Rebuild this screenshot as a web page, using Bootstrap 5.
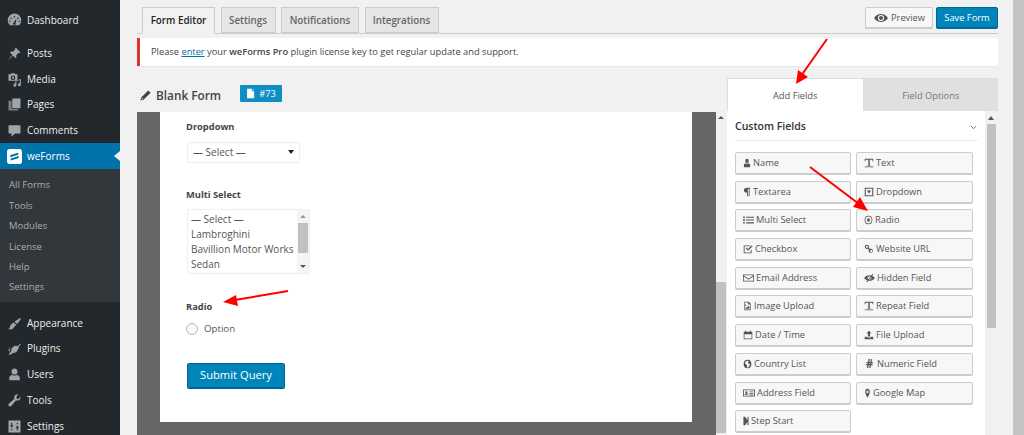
<!DOCTYPE html>
<html lang="en">
<head>
  <meta charset="UTF-8" />
  <meta name="viewport" content="width=device-width, initial-scale=1" />
  <title>weForms</title>
  <link href="https://cdn.jsdelivr.net/npm/bootstrap@5.3.0/dist/css/bootstrap.min.css" rel="stylesheet" />
  <style>
    html, body { height: 435px; overflow: hidden; }
    body { font-family: "Open Sans", "Liberation Sans", sans-serif; font-size: 10px; color: #444; background: #f1f1f1; position: relative; }
    .wp-page { height: 435px; }
    /* admin menu */
    .wp-side { width: 120px; flex: none; background: #23282d; color: #eee; padding-top: 8px; }
    .wp-item { height: 25.7px; padding-left: 7px; gap: 5px; font-size: 10px; }
    .wp-item svg { width: 15px; height: 15px; fill: #a0a5aa; flex: none; }
    .wp-item-active { background: #0073aa; color: #fff; position: relative; height: 26px; }
    .wp-item-active::after { content: ""; position: absolute; right: 0; top: 8px; border: 5px solid transparent; border-right: 6px solid #f1f1f1; border-left: 0; }
    .wp-gap-a { height: 7px; }
    .wp-gap-b { height: 8px; }
    .wp-sub { background: #32373c; padding: 6px 0 5px; height: 133px; }
    .wp-sub div { height: 20.4px; line-height: 20px; padding-left: 9px; font-size: 9.5px; color: #a9aeb3; }
    /* main */
    .wp-main { width: 893px; flex: none; padding: 7px 15px 0 17px; }
    .wp-scroll-main { flex: 1; background: #c4c4c4; }
    .wf-tabs { border-bottom: 1px solid #ccc; height: 27px; padding-left: 5px; gap: 5.5px; }
    .wf-tabs .nav-link { height: 26px; padding: 0; line-height: 25px; text-align: center; font-size: 9.8px; font-weight: 600; color: #666; background: #e5e5e5; border: 1px solid #ccc; border-radius: 0; margin: 0; }
    .wf-tabs .nav-link.active { background: #f1f1f1; color: #222; border-bottom-color: #f1f1f1; height: 27px; }
    .wf-tabs .nav-item:nth-child(1) .nav-link { width: 73px; }
    .wf-tabs .nav-item:nth-child(2) .nav-link { width: 55px; }
    .wf-tabs .nav-item:nth-child(3) .nav-link { width: 78px; }
    .wf-tabs .nav-item:nth-child(4) .nav-link { width: 74px; }
    .wf-actions { right: 0; top: 0; gap: 3px; }
    .wf-top { position: relative; }
    .btn-preview, .btn-save { height: 21px; padding: 0 8px; font-size: 9.3px; border-radius: 2px; line-height: 19px; }
    .btn-preview { background: #f7f7f7; border: 1px solid #ccc; color: #555; box-shadow: 0 1px 0 #ccc; width: 68px; display: flex; align-items: center; gap: 3px; }
    .btn-preview svg { width: 14px; height: 14px; fill: #555; flex: none; }
    .btn-save { background: #0085ba; border: 1px solid #006799; color: #fff; box-shadow: 0 1px 0 #006799; width: 62px; padding: 0; }
    .wf-notice { background: #fff; border: 0; border-left: 3px solid #dc3232; border-radius: 0; height: 28px; margin: 4px 0 12px; padding: 0 11px; line-height: 28px; font-size: 9.3px; color: #444; box-shadow: 0 1px 1px rgba(0,0,0,.04); }
    .wf-notice a { color: #0073aa; }
    .wf-notice b { font-weight: 600; }
    .wf-work { gap: 1px; height: 357px; }
    .wf-left { width: 589px; flex: none; }
    .wf-title { height: 34px; padding-left: 3px; padding-top: 1px; gap: 1px; font-size: 11.8px; font-weight: 600; color: #444; }
    .wf-title svg { width: 11px; height: 11px; fill: #444; flex: none; }
    .wf-badge { background: #0e8fc4; color: #fff; border-radius: 1px; height: 17px; width: 42px; margin-left: 18px; margin-bottom: 4px; font-size: 9.3px; font-weight: 400; gap: 3px; }
    .wf-badge svg { width: 10px; height: 11px; fill: #fff; }
    .wf-canvas-wrap { height: 323px; }
    .wf-canvas { width: 579px; background: #666; padding: 0 24px 13px 23px; }
    .wf-sheet { background: #fff; height: 100%; padding: 8px 27px; }
    .wf-scroll { width: 10px; background: #f1f1f1; position: relative; }
    .wf-thumb { position: absolute; left: 0; right: 0; background: #c1c1c1; }
    .wf-up { position: absolute; left: 2px; top: 4px; border: 3px solid transparent; border-bottom: 3px solid #555; border-top: 0; }
    .wf-label { font-size: 9.3px; font-weight: 700; color: #444; line-height: 14px; margin: 0 0 0 -1px; }
    .wf-selwrap { width: 113px; height: 21px; position: relative; margin: 8px 0 25px; }
    .wf-selwrap select { width: 100%; height: 100%; padding: 0 5px; border: 1px solid #eee; border-radius: 2px; font: inherit; font-size: 10px; color: #555; background: #fff; appearance: none; box-shadow: none; }
    .wf-selwrap::after { content: ""; position: absolute; right: 6px; top: 8px; border: 3px solid transparent; border-top: 4px solid #222; border-bottom: 0; }
    .wf-multi { width: 123px; height: 65px; border: 1px solid #eee; border-radius: 2px; margin: 7px 0 26px; font-size: 10px; line-height: 14.9px; color: #555; }
    .wf-multi ul { padding: 2px 3px; margin: 0; list-style: none; white-space: nowrap; flex: 1; }
    .wf-multi .wf-scroll { width: 13px; background: #f5f5f5; }
    .wf-multi .wf-thumb { top: 13px; height: 30px; left: 1px; right: 1px; }
    .wf-multi .wf-up { left: 3px; top: 5px; border-bottom-color: #999; }
    .wf-down { position: absolute; left: 3px; bottom: 5px; border: 3px solid transparent; border-top: 3px solid #555; border-bottom: 0; }
    .wf-radio { gap: 6px; margin: 9px 0 28px -1px; font-size: 9.7px; color: #555; height: 12px; }
    .wf-radio .form-check-input { width: 12px; height: 12px; margin: 0; border: 1px solid #b4b9be; background: #fafafa; }
    .btn-submit { background: #0085ba; border: 1px solid #006799; color: #fff; box-shadow: 0 1px 0 #006799; font-size: 11.2px; width: 98px; height: 25px; padding: 0; border-radius: 2px; }
    /* field panel */
    .wf-right { width: 271px; flex: none; }
    .wf-ptabs { height: 33px; }
    .wf-ptabs div { width: 50%; height: 33px; line-height: 33px; text-align: center; font-size: 9.3px; background: #e0e0e0; color: #777; border: 1px solid #ddd; border-width: 1px 0 0 1px; }
    .wf-ptabs .wf-ptab-on { background: #fff; color: #555; }
    .wf-panel { height: 324px; background: #fff; }
    .wf-panel-in { flex: 1; padding: 0 7px 0 8px; }
    .wf-panel .wf-scroll { width: 13px; }
    .wf-panel .wf-thumb { top: 13px; height: 204px; left: 2px; right: 2px; }
    .wf-panel .wf-up { left: 3px; top: 5px; border-width: 0 3.5px 4px; }
    .wf-head { height: 30px; padding-top: 3px; border-bottom: 1px solid #eee; font-size: 10.5px; font-weight: 600; color: #333; }
    .wf-head svg { width: 7px; height: 5px; margin-right: 1px; fill: none; stroke: #666; stroke-width: 1.2; }
    .wf-fields { display: grid; grid-template-columns: 116px 117px; column-gap: 5px; row-gap: 6.7px; margin-top: 11px; }
    .btn-field { height: 22px; padding: 0 0 0 7px; border: 1px solid #ccc; border-radius: 2px; background: #f7f7f7; box-shadow: 0 1px 0 #ccc; font-size: 9.3px; color: #555; display: flex; align-items: center; gap: 2px; white-space: nowrap; }
    .btn-field svg { height: 10px; fill: #555; flex: none; }
    .btn-field b { font-size: 11.5px; line-height: 1; width: 11px; color: #555; }
    .wf-w6 { width: 6px; } .wf-w7 { width: 7px; } .wf-w8 { width: 8px; } .wf-w9 { width: 9px; }
    .wf-w10 { width: 10px; } .wf-w11 { width: 11px; } .wf-w12 { width: 12px; }
    /* annotation arrows */
    .wf-arrows { position: absolute; left: 0; top: 0; width: 1024px; height: 435px; pointer-events: none; }
  </style>
</head>
<body>

<svg width="0" height="0" class="position-absolute">
  <symbol id="i-dash" viewBox="0 0 20 20"><path d="M3.800 16.300A9 9 0 1 1 16.200 16.300ZM10 4a1 1 0 1 0 0 2 1 1 0 0 0 0-2ZM5.500 6a1 1 0 1 0 0 2 1 1 0 0 0 0-2ZM14.500 6a1 1 0 1 0 0 2 1 1 0 0 0 0-2ZM3.800 10a1 1 0 1 0 0 2 1 1 0 0 0 0-2ZM16.200 10a1 1 0 1 0 0 2 1 1 0 0 0 0-2ZM8.600 13.200a1.600 1.600 0 1 0 2.800 1.200L12.500 7.500Z" fill-rule="evenodd"/></symbol>
  <symbol id="i-pin" viewBox="0 0 20 20"><path d="M11.500 2 18 8.500l-1.500 1-1-.5-3.200 3.200c.5 1.500.2 3-.8 4L8 12.700 2.500 18 2 17.500 7.300 12 3.800 8.500c1-1 2.500-1.300 4-.8L11 4.500l-.5-1Z"/></symbol>
  <symbol id="i-media" viewBox="0 0 20 20"><path d="M2 3h3l1-1.500h4L11 3h3v8.500H2ZM8 4.500a3 3 0 1 0 0 6 3 3 0 0 0 0-6ZM8 6a1.500 1.500 0 1 1 0 3 1.500 1.500 0 0 1 0-3ZM18.500 9v8a2 2 0 1 1-1.500-1.900V10.500L12.500 12v5.500a2 2 0 1 1-1.500-1.900V12.500Z" fill-rule="evenodd"/></symbol>
  <symbol id="i-pages" viewBox="0 0 20 20"><path d="M7 2h11v13H7Z"/><path d="M2 5h4v11h9v2H2Z" opacity=".7"/></symbol>
  <symbol id="i-comment" viewBox="0 0 20 20"><path d="M3 3h14a1 1 0 0 1 1 1v9a1 1 0 0 1-1 1h-6l-5 4v-4H3a1 1 0 0 1-1-1V4a1 1 0 0 1 1-1Z"/></symbol>
  <symbol id="i-brush" viewBox="0 0 20 20"><path d="M18.500 3c.3 1.500-2.500 5-5 7.500l-3.500-3C12.500 5.500 17 2.500 18.500 3ZM9 8.500l3.500 3-1.500 1.500-4 4.500H1.500c2-1 2.500-2.500 3-4.500.5-2 2.500-3.500 4.500-4.500Z"/></symbol>
  <symbol id="i-plug" viewBox="0 0 20 20"><path d="M16.500 2.500 13 6l1 1 3.500-3.500 1 1L15 8l1 1-3 5c-1 1.500-3 2-4.500 1.500L5.500 18H2l4-5.500c-.5-1.500 0-3 1.200-3.800L11 6l1 1 3.500-3.500Z M3 8l1 6-2-1Z"/></symbol>
  <symbol id="i-user" viewBox="0 0 20 20"><path d="M10 2a4 4 0 0 1 4 4.500c0 2-1.500 3.500-4 3.500S6 8.500 6 6.500A4 4 0 0 1 10 2ZM7 10.500c2 1.200 4 1.200 6 0 2.500.5 4 1.500 4 3.500v3.500H3V14c0-2 1.500-3 4-3.500Z"/></symbol>
  <symbol id="i-wrench" viewBox="0 0 20 20"><path d="M17.800 4.500c.7 2-.1 4-1.600 5-1.200.8-2.800.8-4 .3L6 17c-1 1.200-2.500 1.200-3.500.2S1.500 15 2.800 14l7-6.300c-.5-1.300-.4-2.800.4-4 1-1.500 3-2.200 5-1.500L12.500 5l.5 2.500 2.500.5Z"/></symbol>
  <symbol id="i-sliders" viewBox="0 0 20 20"><path d="M2 2h16v16H2ZM5.500 5v3.500H4l2.200 3 2.200-3H7V5ZM13 15v-3.500h-1.500l2.300-3 2.200 3h-1.500V15ZM5.500 13v2h1.500v-2ZM13 5v2h1.500V5Z" fill-rule="evenodd"/></symbol>
  <symbol id="f-user" viewBox="0 0 14 14" preserveAspectRatio="none"><path d="M7 1a3 3 0 0 1 3 3.200C10 6 8.700 7.200 7 7.200S4 6 4 4.200A3 3 0 0 1 7 1ZM4 7.200c1.800 1.200 4.200 1.200 6 0 1.500.2 2.500 1.300 2.500 3.300V12a1 1 0 0 1-1 1h-9a1 1 0 0 1-1-1v-1.500c0-2 1-3.100 2.500-3.300Z"/></symbol>
  <symbol id="f-text" viewBox="0 0 14 14" preserveAspectRatio="none"><path d="M1 1h12v3.500h-1L11.500 2.500H8V10h1.500v1h-5v-1H6V2.500H2.500L2 4.500H1ZM1 12h12v1H1Z"/></symbol>
  <symbol id="f-para" viewBox="0 0 14 14" preserveAspectRatio="none"><path d="M13 1v1.500h-1.500V13H10V2.500H8.500V13H7V8C3.500 8 1.500 6.800 1.500 4.500S3.500 1 7 1Z"/></symbol>
  <symbol id="f-drop" viewBox="0 0 14 14" preserveAspectRatio="none"><path d="M1 1h12v12H1ZM2.500 2.500v9h9v-9ZM4 5h6L7 9Z" fill-rule="evenodd"/></symbol>
  <symbol id="f-list" viewBox="0 0 14 14" preserveAspectRatio="none"><path d="M0 2h2.500v2H0ZM4 2.300h10v1.500H4ZM0 6h2.500v2H0ZM4 6.300h10v1.500H4ZM0 10h2.500v2H0ZM4 10.300h10v1.500H4Z"/></symbol>
  <symbol id="f-radio" viewBox="0 0 14 14" preserveAspectRatio="none"><path d="M7 1a6 6 0 1 1 0 12A6 6 0 0 1 7 1Zm0 1.200a4.800 4.800 0 1 0 0 9.600 4.800 4.800 0 0 0 0-9.600ZM7 4.700a2.300 2.300 0 1 1 0 4.600 2.300 2.300 0 0 1 0-4.600Z" fill-rule="evenodd"/></symbol>
  <symbol id="f-check" viewBox="0 0 14 14" preserveAspectRatio="none"><path d="M1 2h9v1.200H2.200v8.600h8.600V8H12v5H1Z"/><path d="m4 6 1-1 2 2 5-5 1.500 1L7 9.500Z"/></symbol>
  <symbol id="f-link" viewBox="0 0 14 14" preserveAspectRatio="none"><path d="M4 1a3 3 0 0 1 3 3c0 .5-.1.9-.3 1.300l1.500 1.500c.4-.2.8-.3 1.300-.3a3 3 0 1 1-3 3c0-.5.1-.9.3-1.300L5.300 6.700C4.900 6.900 4.500 7 4 7a3 3 0 1 1 0-6Zm0 1.500a1.500 1.500 0 1 0 0 3 1.500 1.500 0 0 0 0-3Zm6 6a1.500 1.500 0 1 0 0 3 1.500 1.500 0 0 0 0-3Z" fill-rule="evenodd"/></symbol>
  <symbol id="f-mail" viewBox="0 0 14 14" preserveAspectRatio="none"><path d="M0 2h14v10H0Zm1 1v.6l6 4.400 6-4.400V3Zm0 1.900V11h12V4.900L7 9.300Z" fill-rule="evenodd"/></symbol>
  <symbol id="f-eyeoff" viewBox="0 0 14 14" preserveAspectRatio="none"><path d="M7 3c3 0 5.500 1.800 7 4-1.500 2.200-4 4-7 4S1.500 9.200 0 7c1.500-2.200 4-4 7-4Zm0 1.500a2.500 2.500 0 1 0 0 5 2.500 2.500 0 0 0 0-5Z" fill-rule="evenodd"/><path d="m11 1 1 .7-8 11.300-1-.7Z"/></symbol>
  <symbol id="f-image" viewBox="0 0 14 14" preserveAspectRatio="none"><path d="M2 1h7l3 3v9H2Zm1 1v10h8V5H8V2Zm1 3a1 1 0 1 1 0 2 1 1 0 0 1 0-2Zm-.2 6V9.500L5 8.300l1 1 2.500-2.500L10 8.500V11Z" fill-rule="evenodd"/></symbol>
  <symbol id="f-cal" viewBox="0 0 14 14" preserveAspectRatio="none"><path d="M1 2.500h2V1h1.500v1.500h5V1H11v1.500h2V13H1Zm1 3.500v6h10V6Z" fill-rule="evenodd"/></symbol>
  <symbol id="f-upload" viewBox="0 0 14 14" preserveAspectRatio="none"><path d="M7 1l3.500 3.500H8.500V9h-3V4.500H3.500ZM1 9.500h3.500v1h5v-1H13V13H1Z"/></symbol>
  <symbol id="f-globe" viewBox="0 0 14 14" preserveAspectRatio="none"><path d="M7 1a6 6 0 1 1 0 12A6 6 0 0 1 7 1ZM4 3.500 3 6l2 1.500L6.500 9l-.5 3 2 0 2-2.500 1-2.500L9 6.500 7.500 5 9 3.500 7 2.500Z" fill-rule="evenodd"/></symbol>
  <symbol id="f-card" viewBox="0 0 14 14" preserveAspectRatio="none"><path d="M0 2h14v10H0Zm1 1v8h12V3Zm3 1.500a1.300 1.300 0 1 1 0 2.600 1.300 1.300 0 0 1 0-2.600ZM2 9.500c0-1.300.8-2 2-2s2 .7 2 2ZM7.500 5H12v1H7.500Zm0 2H12v1H7.500Zm0 2H12v1H7.500Z" fill-rule="evenodd"/></symbol>
  <symbol id="f-map" viewBox="0 0 14 14" preserveAspectRatio="none"><path d="M7 1a4.500 4.500 0 0 1 4.500 4.500C11.500 8 8.500 12 7 13.500 5.500 12 2.500 8 2.500 5.500A4.500 4.500 0 0 1 7 1Zm0 2.500a2 2 0 1 0 0 4 2 2 0 0 0 0-4Z" fill-rule="evenodd"/></symbol>
  <symbol id="f-step" viewBox="0 0 14 14" preserveAspectRatio="none"><path d="M1 1h4v12H1ZM5 1l7 6-7 6ZM10.500 1H13v12h-2.500Z"/></symbol>
</svg>

<div class="wp-page d-flex">
  <aside class="wp-side">
    <div class="wp-item d-flex align-items-center"><svg><use href="#i-dash"/></svg>Dashboard</div>
    <div class="wp-gap-a"></div>
    <div class="wp-item d-flex align-items-center"><svg><use href="#i-pin"/></svg>Posts</div>
    <div class="wp-item d-flex align-items-center"><svg><use href="#i-media"/></svg>Media</div>
    <div class="wp-item d-flex align-items-center"><svg><use href="#i-pages"/></svg>Pages</div>
    <div class="wp-item d-flex align-items-center"><svg><use href="#i-comment"/></svg>Comments</div>
    <div class="wp-item wp-item-active d-flex align-items-center">
      <svg viewBox="0 0 16 16"><rect width="16" height="16" rx="3" fill="#fff"/><path d="M3.500 6.500 12 4v2.200L3.500 8.700ZM4 10l8.500-2.500v2.200L4 12.200Z" fill="#0073aa"/></svg>weForms
    </div>
    <div class="wp-sub">
      <div>All Forms</div>
      <div>Tools</div>
      <div>Modules</div>
      <div>License</div>
      <div>Help</div>
      <div>Settings</div>
    </div>
    <div class="wp-gap-b"></div>
    <div class="wp-item d-flex align-items-center"><svg><use href="#i-brush"/></svg>Appearance</div>
    <div class="wp-item d-flex align-items-center"><svg><use href="#i-plug"/></svg>Plugins</div>
    <div class="wp-item d-flex align-items-center"><svg><use href="#i-user"/></svg>Users</div>
    <div class="wp-item d-flex align-items-center"><svg><use href="#i-wrench"/></svg>Tools</div>
    <div class="wp-item d-flex align-items-center"><svg><use href="#i-sliders"/></svg>Settings</div>
  </aside>

  <main class="wp-main">
    <div class="wf-top">
      <ul class="nav wf-tabs">
        <li class="nav-item"><a class="nav-link active" href="#">Form Editor</a></li>
        <li class="nav-item"><a class="nav-link" href="#">Settings</a></li>
        <li class="nav-item"><a class="nav-link" href="#">Notifications</a></li>
        <li class="nav-item"><a class="nav-link" href="#">Integrations</a></li>
      </ul>
      <div class="wf-actions d-flex position-absolute">
        <button class="btn btn-preview"><svg viewBox="0 0 14 14"><path d="M7 3c2.800 0 5.300 1.600 7 4-1.700 2.400-4.200 4-7 4S1.700 9.400 0 7c1.700-2.400 4.200-4 7-4Zm0 .9a3.100 3.100 0 1 0 0 6.200 3.100 3.100 0 0 0 0-6.200Zm0 1.100a2 2 0 1 1 0 4 2 2 0 0 1 0-4Z" fill-rule="evenodd"/></svg>Preview</button>
        <button class="btn btn-save">Save Form</button>
      </div>
    </div>

    <div class="wf-notice">Please <a href="#">enter</a> your <b>weForms Pro</b> plugin license key to get regular update and support.</div>

    <div class="wf-work d-flex">
      <div class="wf-left">
        <div class="wf-title d-flex align-items-center">
          <svg viewBox="0 0 14 14"><path d="M10.500 0.500 13.500 3.500 4.500 12.500 0.500 13.500 1.500 9.500ZM2.500 10 2 12 4 11.500 3 10.500Z" fill-rule="evenodd"/></svg>
          <span class="ms-1">Blank Form</span>
          <span class="wf-badge d-inline-flex align-items-center justify-content-center"><svg viewBox="0 0 12 14"><path d="M1 1h6v3h3v9H1Zm7 0 2 2H8Z"/></svg>#73</span>
        </div>
        <div class="wf-canvas-wrap d-flex">
          <div class="wf-canvas">
            <div class="wf-sheet">
              <p class="wf-label">Dropdown</p>
              <div class="wf-selwrap"><select><option>— Select —</option></select></div>
              <p class="wf-label">Multi Select</p>
              <div class="wf-multi d-flex">
                <ul>
                  <li>— Select —</li>
                  <li>Lambroghini</li>
                  <li>Bavillion Motor Works</li>
                  <li>Sedan</li>
                </ul>
                <div class="wf-scroll"><span class="wf-up"></span><span class="wf-thumb"></span><span class="wf-down"></span></div>
              </div>
              <p class="wf-label">Radio</p>
              <div class="wf-radio d-flex align-items-center"><input class="form-check-input" type="radio" name="opt" />Option</div>
              <button class="btn btn-submit">Submit Query</button>
            </div>
          </div>
          <div class="wf-scroll"><span class="wf-up"></span><span class="wf-thumb" style="top: 170px; height: 151px"></span></div>
        </div>
      </div>

      <div class="wf-right">
        <div class="wf-ptabs d-flex">
          <div class="wf-ptab-on">Add Fields</div>
          <div>Field Options</div>
        </div>
        <div class="wf-panel d-flex">
          <div class="wf-panel-in">
            <div class="wf-head d-flex align-items-center justify-content-between">
              Custom Fields
              <svg viewBox="0 0 9 6"><path d="M1 1l3.500 3.500L8 1"/></svg>
            </div>
            <div class="wf-fields">
              <button class="btn-field"><svg class="wf-w8"><use href="#f-user"/></svg>Name</button>
              <button class="btn-field"><svg class="wf-w10"><use href="#f-text"/></svg>Text</button>
              <button class="btn-field"><svg class="wf-w8"><use href="#f-para"/></svg>Textarea</button>
              <button class="btn-field"><svg class="wf-w10"><use href="#f-drop"/></svg>Dropdown</button>
              <button class="btn-field"><svg class="wf-w11"><use href="#f-list"/></svg>Multi Select</button>
              <button class="btn-field"><svg class="wf-w9"><use href="#f-radio"/></svg>Radio</button>
              <button class="btn-field"><svg class="wf-w10"><use href="#f-check"/></svg>Checkbox</button>
              <button class="btn-field"><svg class="wf-w10"><use href="#f-link"/></svg>Website URL</button>
              <button class="btn-field"><svg class="wf-w11"><use href="#f-mail"/></svg>Email Address</button>
              <button class="btn-field"><svg class="wf-w11"><use href="#f-eyeoff"/></svg>Hidden Field</button>
              <button class="btn-field"><svg class="wf-w9"><use href="#f-image"/></svg>Image Upload</button>
              <button class="btn-field"><svg class="wf-w10"><use href="#f-text"/></svg>Repeat Field</button>
              <button class="btn-field"><svg class="wf-w10"><use href="#f-cal"/></svg>Date / Time</button>
              <button class="btn-field"><svg class="wf-w10"><use href="#f-upload"/></svg>File Upload</button>
              <button class="btn-field"><svg class="wf-w9"><use href="#f-globe"/></svg>Country List</button>
              <button class="btn-field"><b>#</b>Numeric Field</button>
              <button class="btn-field"><svg class="wf-w12"><use href="#f-card"/></svg>Address Field</button>
              <button class="btn-field"><svg class="wf-w7"><use href="#f-map"/></svg>Google Map</button>
              <button class="btn-field"><svg class="wf-w6"><use href="#f-step"/></svg>Step Start</button>
            </div>
          </div>
          <div class="wf-scroll"><span class="wf-up"></span><span class="wf-thumb"></span></div>
        </div>
      </div>
    </div>
  </main>
  <div class="wp-scroll-main"></div>
</div>

<svg class="wf-arrows" viewBox="0 0 1024 435">
  <g stroke="#f00" stroke-width="2" fill="#f00">
    <path d="M827 39 801 76"/>
    <path stroke="none" d="M796 84 798 70 808 77Z"/>
    <path d="M810 167 859 204"/>
    <path stroke="none" d="M868 211 853 207 860 197Z"/>
    <path d="M288 291 235 300"/>
    <path stroke="none" d="M223 302 236 295 238 306Z"/>
  </g>
</svg>

<script src="https://cdn.jsdelivr.net/npm/bootstrap@5.3.0/dist/js/bootstrap.bundle.min.js"></script>
</body>
</html>
